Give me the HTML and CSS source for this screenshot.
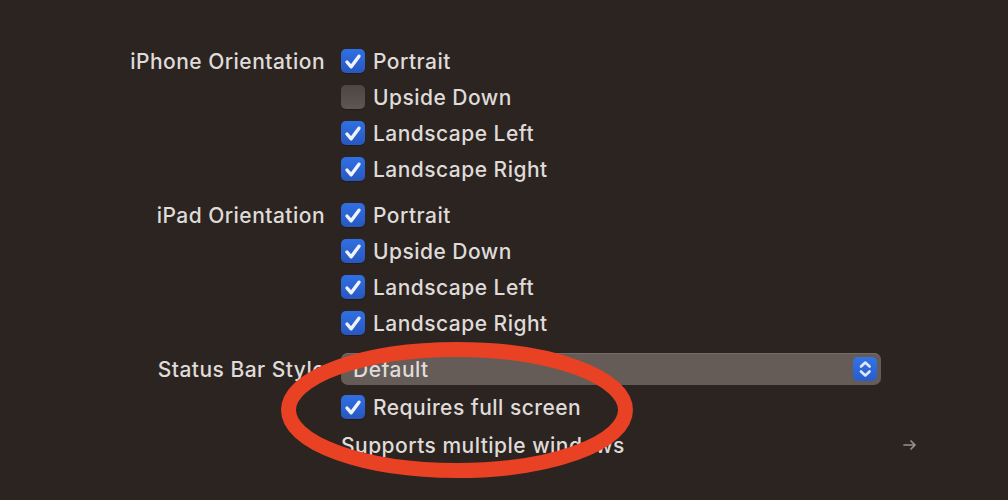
FILE: index.html
```html
<!DOCTYPE html>
<html lang="en">
<head>
<meta charset="utf-8">
<title>Deployment Info</title>
<link rel="stylesheet" href="styles.css">
</head>
<body>
<main class="form">
  <section class="row group">
    <div class="label">iPhone Orientation</div>
    <div class="options">
      <div class="option"><span class="box on"><svg viewBox="0 0 24 24"><path d="M6 13l4.200 4.800 7.800-10.600"/></svg></span>Portrait</div>
      <div class="option"><span class="box"></span>Upside Down</div>
      <div class="option"><span class="box on"><svg viewBox="0 0 24 24"><path d="M6 13l4.200 4.800 7.800-10.600"/></svg></span>Landscape Left</div>
      <div class="option"><span class="box on"><svg viewBox="0 0 24 24"><path d="M6 13l4.200 4.800 7.800-10.600"/></svg></span>Landscape Right</div>
    </div>
  </section>
  <section class="row group">
    <div class="label">iPad Orientation</div>
    <div class="options">
      <div class="option"><span class="box on"><svg viewBox="0 0 24 24"><path d="M6 13l4.200 4.800 7.800-10.600"/></svg></span>Portrait</div>
      <div class="option"><span class="box on"><svg viewBox="0 0 24 24"><path d="M6 13l4.200 4.800 7.800-10.600"/></svg></span>Upside Down</div>
      <div class="option"><span class="box on"><svg viewBox="0 0 24 24"><path d="M6 13l4.200 4.800 7.800-10.600"/></svg></span>Landscape Left</div>
      <div class="option"><span class="box on"><svg viewBox="0 0 24 24"><path d="M6 13l4.200 4.800 7.800-10.600"/></svg></span>Landscape Right</div>
    </div>
  </section>
  <section class="row status">
    <div class="label">Status Bar Style</div>
    <div class="select">
      <span>Default</span>
      <span class="stepper"><svg viewBox="0 0 24 24"><path d="M8 9.500L12.300 5.500l4.300 4M8 14.500l4.300 4 4.300-4"/></svg></span>
    </div>
  </section>
  <section class="row full">
    <div class="label"></div>
    <div class="option"><span class="box on"><svg viewBox="0 0 24 24"><path d="M6 13l4.200 4.800 7.800-10.600"/></svg></span>Requires full screen</div>
  </section>
  <section class="row multi">
    <div class="label"></div>
    <div class="link">
      <span>Supports multiple windows</span>
      <svg class="arrow" viewBox="0 0 14 12"><path d="M1 6h11M8 2l4 4-4 4"/></svg>
    </div>
  </section>
</main>
<svg class="circle" viewBox="0 0 1008 500"><ellipse cx="457" cy="410" rx="168.500" ry="60.500"/></svg>
</body>
</html>
```
FILE: styles.css
```css
* { box-sizing: border-box; }
html, body { margin: 0; height: 500px; overflow: hidden; }
body {
  background: #2c2420;
  color: #dfdbd9;
  font-family: Inter, "Liberation Sans", sans-serif;
  font-size: 21px;
  font-weight: 450;
  letter-spacing: 0.47px;
  position: relative;
}
.form { display: flex; flex-direction: column; padding: 43px 0 0 0; width: 917px; }
.row { display: grid; grid-template-columns: 325px 1fr; column-gap: 16px; }
.group { margin-bottom: 10px; }
.label { text-align: right; line-height: 38px; height: 36px; white-space: nowrap; }
.options { display: flex; flex-direction: column; }
.option { display: flex; align-items: center; height: 36px; gap: 8px; white-space: nowrap; }
.box {
  width: 24px; height: 24px; border-radius: 5px;
  background: linear-gradient(#4d4643, #5e5653);
  box-shadow: 0 1px 1px rgba(0, 0, 0, 0.25);
  flex: none;
}
.box.on { background: linear-gradient(#3070e4, #2857c0); }
.box svg { display: block; width: 24px; height: 24px; }
.box path { fill: none; stroke: #f0f3fb; stroke-width: 3.400; stroke-linecap: round; stroke-linejoin: round; }
.status { height: 36px; margin-bottom: 2px; }
.select {
  width: 540px; height: 32px; margin-top: 2px;
  border-radius: 7px;
  background: #655b57;
  box-shadow: inset 0 1px 0 #756c68;
  display: flex; align-items: center; justify-content: space-between;
  padding: 0 4px 0 12px;
  line-height: 33px;
}
.stepper {
  width: 24px; height: 24px; border-radius: 5px;
  background: linear-gradient(#3273e6, #2a5ccb);
  flex: none;
}
.stepper svg { display: block; width: 24px; height: 24px; }
.stepper path { fill: none; stroke: #dfe7fb; stroke-width: 2.600; stroke-linecap: round; stroke-linejoin: round; }
.full { margin-bottom: 2px; }
.multi { height: 36px; }
.link { display: flex; align-items: center; justify-content: space-between; height: 36px; }
.arrow { width: 14px; height: 12px; flex: none; }
.arrow path { fill: none; stroke: #9a918d; stroke-width: 1.700; stroke-linecap: round; stroke-linejoin: round; }
.circle { position: absolute; left: 0; top: 0; width: 1008px; height: 500px; pointer-events: none; }
.circle ellipse { fill: none; stroke: #e84124; stroke-width: 15; }
```
